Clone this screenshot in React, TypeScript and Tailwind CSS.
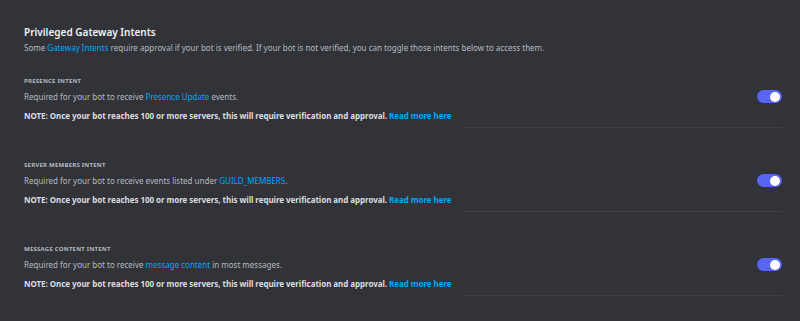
const intents = [
  {
    title: "PRESENCE INTENT",
    before: "Required for your bot to receive ",
    link: "Presence Update",
    after: " events.",
  },
  {
    title: "SERVER MEMBERS INTENT",
    before: "Required for your bot to receive events listed under ",
    link: "GUILD_MEMBERS",
    after: ".",
  },
  {
    title: "MESSAGE CONTENT INTENT",
    before: "Required for your bot to receive ",
    link: "message content",
    after: " in most messages.",
  },
];

function Toggle() {
  return (
    <div className="mt-[14px] flex h-[13px] w-[25px] shrink-0 items-center justify-end rounded-full bg-[#5865f2] pr-[2px]">
      <div className="h-[10px] w-[10px] rounded-full bg-white" />
    </div>
  );
}

export default function App() {
  return (
    <div
      className="min-h-[321px] w-full bg-[#313338] pl-6 pr-[18px] pt-[25px] text-[#b5bac1]"
      style={{ fontFamily: '"Noto Sans", sans-serif' }}
    >
      <h2 className="text-[10px] font-semibold leading-[14px] text-[#f2f3f5]">Privileged Gateway Intents</h2>
      <p className="mt-[3px] text-[8px] leading-[12px]">
        Some <span className="text-[#00a8fc]">Gateway Intents</span> require approval if your bot is verified. If your bot is not verified, you can toggle those intents below to access them.
      </p>

      <div className="mt-[22px] flex flex-col gap-[32px]">
        {intents.map((intent) => (
          <div key={intent.title}>
            <div className="flex justify-between">
              <div>
                <p className="text-[6px] font-bold leading-[10px] tracking-[0.04em] text-[#b5bac1]">{intent.title}</p>
                <p className="mt-[5px] text-[8px] leading-[12px]">
                  {intent.before}
                  <span className="text-[#00a8fc]">{intent.link}</span>
                  {intent.after}
                </p>
                <p className="mt-[7px] text-[8px] font-bold leading-[12px] tracking-[-0.006em] text-[#dbdee1]">
                  NOTE: Once your bot reaches 100 or more servers, this will require verification and approval.{" "}
                  <span className="text-[#00a8fc]">Read more here</span>
                </p>
              </div>
              <Toggle />
            </div>
            <div className="ml-[439px] mt-[5px] border-t border-[#3f4147]" />
          </div>
        ))}
      </div>
    </div>
  );
}
